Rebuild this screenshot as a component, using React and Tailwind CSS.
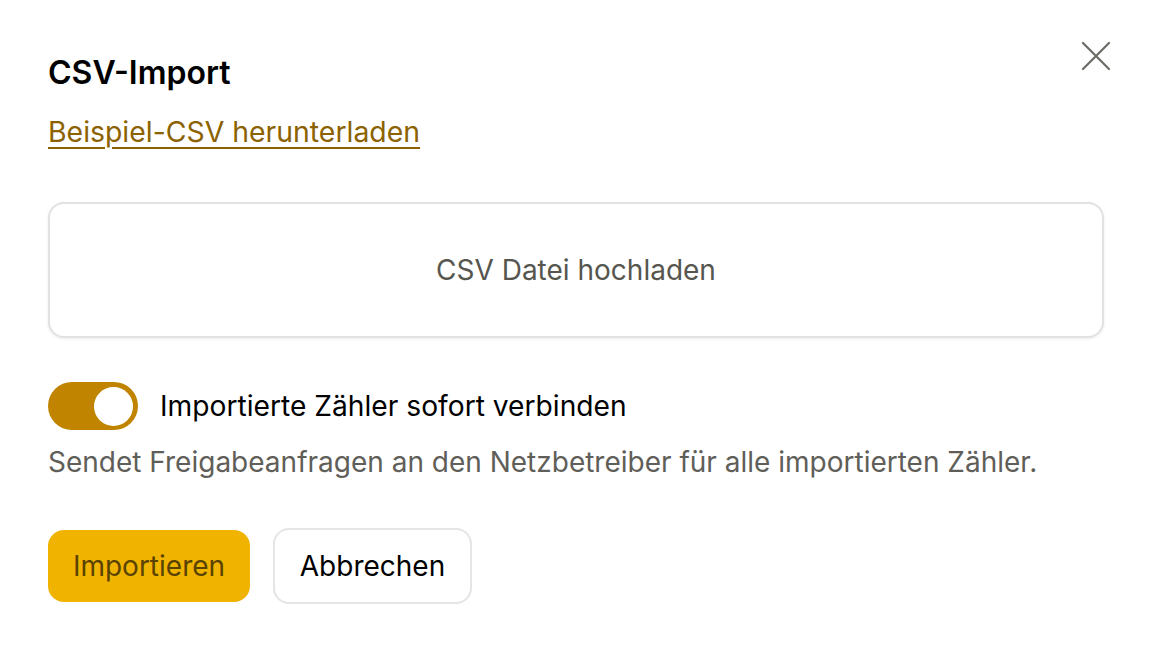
import React, { useState } from "react";

const App = () => {
  const [connect, setConnect] = useState(true);

  return (
    <div
      className="relative min-h-screen w-full bg-white px-12 pt-[52px]"
      style={{ fontFamily: "Inter, 'Liberation Sans', sans-serif" }}
    >
      <button className="absolute right-[40px] top-[40px] flex h-8 w-8 items-center justify-center text-[#6b6b66]">
        <svg width="32" height="32" viewBox="0 0 32 32" fill="none" stroke="currentColor" strokeWidth="2.2" strokeLinecap="round">
          <path d="M3 3 L29 29 M29 3 L3 29" />
        </svg>
      </button>

      <h1 className="text-[32px] font-semibold leading-[42px] text-black">CSV-Import</h1>

      <a
        href="#"
        className="mt-[20px] inline-block text-[28.4px] leading-[36px] text-[#8c6200] underline decoration-2 underline-offset-[5px]"
      >
        Beispiel-CSV herunterladen
      </a>

      <button className="mt-[52px] flex h-[136px] w-full items-center justify-center rounded-[16px] border-2 border-[#e2e2e2] bg-white text-[28px] text-[#56564f] shadow-[0_1px_3px_rgba(0,0,0,0.08)]">
        CSV Datei hochladen
      </button>

      <div className="mt-[44px] flex items-center gap-[22px]">
        <button
          onClick={() => setConnect(!connect)}
          className={
            connect
              ? "flex h-[48px] w-[90px] items-center justify-end rounded-full bg-[#c08400] p-[5px]"
              : "flex h-[48px] w-[90px] items-center justify-start rounded-full bg-[#d4d4d0] p-[5px]"
          }
        >
          <span className="h-[39px] w-[39px] rounded-full bg-white" />
        </button>
        <span className="text-[28.2px] leading-[36px] text-black">Importierte Zähler sofort verbinden</span>
      </div>

      <p className="mt-[14px] text-[28px] leading-[36px] text-[#5f5e58]">
        Sendet Freigabeanfragen an den Netzbetreiber für alle importierten Zähler.
      </p>

      <div className="mt-[48px] flex items-center gap-[23px]">
        <button className="h-[72px] w-[202px] rounded-[16px] bg-[#f0b400] text-[28px] text-[#5a4300]">
          Importieren
        </button>
        <button className="h-[76px] w-[199px] rounded-[16px] border-2 border-[#e5e5e5] bg-white text-[28px] text-black">
          Abbrechen
        </button>
      </div>
    </div>
  );
};

export default App;
